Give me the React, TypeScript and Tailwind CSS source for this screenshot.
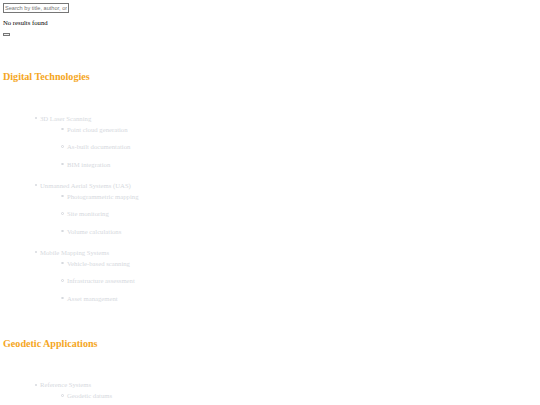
import React from "react";

type Section = { title: string; items: { name: string; subs: string[] }[] };

const sections: Section[] = [
  {
    title: "Digital Technologies",
    items: [
      { name: "3D Laser Scanning", subs: ["Point cloud generation", "As-built documentation", "BIM integration"] },
      { name: "Unmanned Aerial Systems (UAS)", subs: ["Photogrammetric mapping", "Site monitoring", "Volume calculations"] },
      { name: "Mobile Mapping Systems", subs: ["Vehicle-based scanning", "Infrastructure assessment", "Asset management"] },
    ],
  },
  {
    title: "Geodetic Applications",
    items: [{ name: "Reference Systems", subs: ["Geodetic datums"] }],
  },
];

export default function App() {
  return (
    <div className="pl-[3px] pt-[3px] bg-white text-black" style={{ fontFamily: '"Liberation Serif", "Times New Roman", serif' }}>
      <input
        type="text"
        placeholder="Search by title, author, or keyword"
        className="block w-[66px] h-[10px] border border-[#767676] px-[1px] text-[5.6px] leading-[8px] placeholder:text-[#757575] outline-none"
        style={{ fontFamily: '"Liberation Sans", Arial, sans-serif' }}
      />
      <p className="mt-[5px] text-[6.7px] leading-[9px]">No results found</p>
      <button className="block mt-[6px] w-[7px] h-[3px] border border-[#767676] bg-[#efefef]"></button>
      {sections.map((s, si) => (
        <div key={si} className="mt-[34px]">
          <h2 className="text-[10.1px] leading-[14px] font-bold text-[#f5a623]">{s.title}</h2>
          <ul className="mt-[29.5px] pl-[37px] list-none text-[6.7px] leading-[9px] text-[#d6d9de]">
            {s.items.map((it, ii) => (
              <li key={ii} className="mb-[12px]">
                <div className="flex items-center">
                  <span className="-ml-[5px] w-[5px] flex items-center">
                    <span className="block w-[2px] h-[2px] rounded-full bg-[#d6d9de]"></span>
                  </span>
                  <span>{it.name}</span>
                </div>
                <ul className="mt-[2px] pl-[27px] list-none">
                  {it.subs.map((sub, k) => (
                    <li key={k} className="mb-[8.5px] flex items-center">
                      <span className="-ml-[6px] w-[6px] flex items-center">
                        <span className="block w-[2.5px] h-[2.5px] rounded-full border-[0.5px] border-[#d6d9de]"></span>
                      </span>
                      <span>{sub}</span>
                    </li>
                  ))}
                </ul>
              </li>
            ))}
          </ul>
        </div>
      ))}
    </div>
  );
}
